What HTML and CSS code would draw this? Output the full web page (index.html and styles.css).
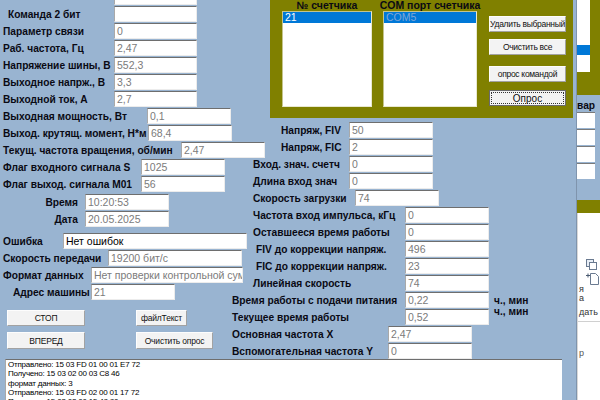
FILE: index.html
```html
<!DOCTYPE html>
<html lang="ru">
<head>
<meta charset="utf-8">
<title>Опрос счетчика</title>
<link rel="stylesheet" href="styles.css">
</head>
<body>
<div class="screen">
  <div class="main">
    <div class="canvas">
      <div class="left">
        <div class="cut"><div class="fld stub"></div></div>
        <div class="row"><span class="lbl w114 ind8">Команда 2 бит</span><div class="fld w83"></div></div>
        <div class="row"><span class="lbl w114">Параметр связи</span><div class="fld w83">0</div></div>
        <div class="row"><span class="lbl w114">Раб. частота, Гц</span><div class="fld w83">2,47</div></div>
        <div class="row"><span class="lbl w114">Напряжение шины, В</span><div class="fld w83">552,3</div></div>
        <div class="row"><span class="lbl w114">Выходное напрж., В</span><div class="fld w83">3,3</div></div>
        <div class="row"><span class="lbl w114">Выходной ток, А</span><div class="fld w83">2,7</div></div>
        <div class="row"><span class="lbl w147">Выходная мощность, Вт</span><div class="fld">0,1</div></div>
        <div class="row"><span class="lbl w148">Выход. крутящ. момент, Н*м</span><div class="fld">68,4</div></div>
        <div class="row"><span class="lbl w181">Текущ. частота вращения, об/мин</span><div class="fld">2,47</div></div>
        <div class="row"><span class="lbl w141">Флаг входного сигнала S</span><div class="fld">1025</div></div>
        <div class="row"><span class="lbl w141">Флаг выход. сигнала М01</span><div class="fld">56</div></div>
        <div class="row mt2"><span class="lbl w85 rt">Время</span><div class="fld">10:20:53</div></div>
        <div class="row"><span class="lbl w85 rt">Дата</span><div class="fld">20.05.2025</div></div>
        <div class="row mt6"><span class="lbl w63">Ошибка</span><div class="fld f184 dark">Нет ошибок</div></div>
        <div class="row"><span class="lbl w108">Скорость передачи</span><div class="fld f134">19200 бит/с</div></div>
        <div class="row"><span class="lbl w91">Формат данных</span><div class="fld f152">Нет проверки контрольной суммы</div></div>
        <div class="row"><span class="lbl w91 ind13">Адрес машины</span><div class="fld">21</div></div>
        <div class="btns">
          <div class="btn b78">СТОП</div>
          <div class="btn b51">файлТекст</div>
          <div class="btn b78 tall">ВПЕРЕД</div>
          <div class="btn b77 tall">Очистить опрос</div>
        </div>
      </div>

      <div class="right">
        <div class="olive">
          <div class="lcol c1">
            <div class="lhead">№ счетчика</div>
            <div class="lbox"><div class="sel">21</div></div>
          </div>
          <div class="lcol c2">
            <div class="lhead">COM порт счетчика</div>
            <div class="lbox"><div class="sel dim">COM5</div></div>
          </div>
          <div class="obtns">
            <div class="btn ob">Удалить выбранный</div>
            <div class="btn ob m7">Очистить все</div>
            <div class="btn ob m11">опрос командой</div>
            <div class="btn ob m8 focus"><span class="frame">Опрос</span></div>
          </div>
        </div>
        <div class="rfields">
          <div class="row ra"><span class="lbl">Напряж, FIV</span><div class="fld">50</div></div>
          <div class="row ra"><span class="lbl">Напряж, FIC</span><div class="fld">2</div></div>
          <div class="row rb"><span class="lbl">Вход. знач. счетч</span><div class="fld">0</div></div>
          <div class="row rb"><span class="lbl">Длина вход знач</span><div class="fld">0</div></div>
          <div class="row rc"><span class="lbl">Скорость загрузки</span><div class="fld">74</div></div>
          <div class="row rd"><span class="lbl">Частота вход импульса, кГц</span><div class="fld">0</div></div>
          <div class="row rd"><span class="lbl">Оставшееся время работы</span><div class="fld">0</div></div>
          <div class="row re"><span class="lbl">FIV до коррекции напряж.</span><div class="fld">496</div></div>
          <div class="row re"><span class="lbl">FIC до коррекции напряж.</span><div class="fld">23</div></div>
          <div class="row rd"><span class="lbl">Линейная скорость</span><div class="fld">74</div></div>
          <div class="row rf"><span class="lbl">Время работы с подачи питания</span><div class="fld">0,22</div><span class="unit low">ч., мин</span></div>
          <div class="row rf"><span class="lbl">Текущее время работы</span><div class="fld">0,52</div><span class="unit high">ч., мин</span></div>
          <div class="row rg"><span class="lbl">Основная частота X</span><div class="fld">2,47</div></div>
          <div class="row rg last"><span class="lbl">Вспомогательная частота Y</span><div class="fld">0</div></div>
        </div>
      </div>
    </div>

    <div class="memo">
      <div>Отправлено: 15 03 FD 01 00 01 E7 72</div>
      <div>Получено: 15 03 02 00 03 C8 46</div>
      <div>формат данных: 3</div>
      <div>Отправлено: 15 03 FD 02 00 01 17 72</div>
      <div>Получено: 15 03 02 00 15 48 80</div>
    </div>
  </div>

  <div class="back">
    <div class="b-top"><div class="b-list"><div class="b-sel"></div></div></div>
    <div class="b-lbl">вар</div>
    <div class="b-fld"></div>
    <div class="b-fld"></div>
    <div class="b-fld"></div>
    <div class="b-fld"></div>
    <div class="b-gap"></div>
    <div class="b-bar"></div>
    <div class="b-panel">
      <div class="b-icon">
        <svg width="14" height="13" viewBox="0 0 14 13"><rect x="1.5" y="1.5" width="7" height="7" fill="#e8eef6" stroke="#6a7a90"/><rect x="4.5" y="4.5" width="7" height="7" fill="#fff" stroke="#6a7a90"/></svg>
      </div>
      <div class="b-icon">
        <svg width="16" height="13" viewBox="0 0 16 13"><path d="M5.5 1.5h5l3 3v8h-8z" fill="#fff" stroke="#6a7a90"/><path d="M1 3.5h4M3 1.5v4" stroke="#4a5a70"/></svg>
      </div>
      <div class="b-txt">я</div>
      <div class="b-txt">а</div>
      <div class="b-txt b-line">дать</div>
      <div class="b-txt b-r">р</div>
    </div>
  </div>
</div>
</body>
</html>
```

FILE: styles.css
```css
* { box-sizing: border-box; }
html, body { margin: 0; padding: 0; }
body {
  width: 600px;
  height: 400px;
  overflow: hidden;
  background: #99b4d1;
  font-family: "Liberation Sans", Arial, sans-serif;
}
.screen { display: flex; width: 600px; height: 400px; overflow: hidden; }

.main {
  width: 577px;
  flex: none;
  background: #99b4d1;
  border-right: 1px solid #7f94ad;
}
.canvas { display: grid; }
.left, .right { grid-area: 1 / 1; }

.row { display: flex; align-items: center; height: 16px; margin-bottom: 1px; }
.lbl {
  flex: none;
  font-size: 10.2px;
  font-weight: bold;
  color: #0a0a14;
  white-space: nowrap;
  padding-left: 3px;
}
.fld {
  flex: none;
  width: 84px;
  height: 16px;
  background: #fff;
  border-top: 1px solid #6e6e6e;
  border-left: 1px solid #a9a9a9;
  border-right: 1px solid #ececec;
  border-bottom: 1px solid #ececec;
  padding-left: 2px;
  font-size: 10.5px;
  line-height: 14px;
  color: #7b7b7b;
  white-space: nowrap;
  overflow: hidden;
}
.fld.dark { color: #000; }
.w83 { width: 83px; }
.f184 { width: 184px; }
.f134 { width: 134px; }
.f152 { width: 152px; }

.cut { height: 6px; padding-left: 114px; }
.fld.stub { width: 83px; height: 5px; border-top: none; }

.lbl.w63 { width: 63px; }
.lbl.w85 { width: 85px; }
.lbl.w91 { width: 91px; }
.lbl.w108 { width: 108px; }
.lbl.w114 { width: 114px; }
.lbl.w141 { width: 141px; }
.lbl.w147 { width: 147px; }
.lbl.w148 { width: 148px; }
.lbl.w181 { width: 181px; }
.lbl.ind8 { padding-left: 8px; }
.lbl.ind13 { padding-left: 13px; }
.lbl.rt { text-align: right; padding-right: 7px; }
.mt2 { margin-top: 2px; }
.mt6 { margin-top: 6px; }

.btns {
  display: grid;
  grid-template-columns: 78px auto;
  column-gap: 51px;
  row-gap: 6px;
  justify-items: start;
  padding-left: 7px;
  margin-top: 10px;
}
.btn {
  height: 16px;
  display: flex;
  align-items: center;
  justify-content: center;
  background: #f3f3f3;
  border: 1px solid;
  border-color: #fdfdfd #a2a2a2 #a2a2a2 #fdfdfd;
  font-size: 8.5px;
  letter-spacing: -0.2px;
  color: #111;
  white-space: nowrap;
}
.btn.tall { height: 17px; }
.b78 { width: 78px; }
.b51 { width: 51px; }
.b77 { width: 77px; }

/* olive list panel */
.right { display: flex; flex-direction: column; }
.olive {
  margin-left: 270px;
  width: 303px;
  height: 118px;
  background: #808000;
  display: flex;
  padding-left: 12px;
}
.lcol { display: flex; flex-direction: column; }
.c1 { width: 90px; }
.c2 { width: 94px; margin-left: 11px; }
.lhead {
  height: 11px;
  display: flex;
  justify-content: center;
  font-size: 10.5px;
  line-height: 11px;
  font-weight: bold;
  color: #0a0a14;
  white-space: nowrap;
}
.lbox {
  height: 96px;
  background: #fff;
  border-top: 1px solid #c4c48c;
  border-left: 1px solid #c4c48c;
  border-right: 1px solid #e8e8d0;
  border-bottom: 1px solid #e8e8d0;
}
.sel {
  height: 11px;
  background: #0078d7;
  color: #fff;
  font-size: 10.5px;
  line-height: 11px;
  padding-left: 2px;
}
.sel.dim { color: #7fa6d8; }
.obtns { display: flex; flex-direction: column; width: 77px; margin-left: 12px; padding-top: 16px; }
.btn.ob { width: 77px; letter-spacing: -0.3px; }
.m7 { margin-top: 7px; }
.m11 { margin-top: 11px; }
.m8 { margin-top: 8px; }
.btn.focus { border-color: #6a6a6a; padding: 1px; }
.frame {
  width: 100%;
  height: 100%;
  border: 1px dotted #333;
  display: flex;
  align-items: center;
  justify-content: center;
  font-size: 10px;
  letter-spacing: 0;
}

.rfields { margin-top: 4px; }
.rfields .lbl { padding-left: 0; }
.ra { margin-left: 281px; }
.ra .lbl { width: 68px; }
.rb { margin-left: 253px; }
.rb .lbl { width: 96px; }
.rc { margin-left: 253px; }
.rc .lbl { width: 102px; }
.rd { margin-left: 253px; }
.rd .lbl { width: 152px; }
.re { margin-left: 256px; }
.re .lbl { width: 149px; }
.rf { margin-left: 232px; }
.rf .lbl { width: 173px; }
.rg { margin-left: 232px; }
.rg .lbl { width: 156px; }
.row.last { margin-bottom: 0; }
.unit {
  font-size: 10.2px;
  font-weight: bold;
  line-height: 10px;
  color: #0a0a14;
  margin-left: 5px;
  white-space: nowrap;
}
.unit.low { align-self: flex-end; margin-bottom: 2px; }
.unit.high { align-self: flex-start; margin-top: -2px; }

.memo {
  margin-left: 5px;
  width: 557px;
  height: 60px;
  background: #fff;
  border-top: 1px solid #6e6e6e;
  border-left: 1px solid #a9a9a9;
  padding-left: 2px;
  font-size: 8px;
  letter-spacing: -0.2px;
  line-height: 9.3px;
  color: #000;
  white-space: nowrap;
}

/* window behind, on the right */
.back { flex: 1; display: flex; flex-direction: column; background: #99b4d1; }
.b-top { height: 95px; background: #808000; }
.b-list { width: 13px; height: 72px; background: #fff; padding-top: 45px; }
.b-sel { height: 10px; background: #0078d7; }
.b-lbl { height: 17px; font-size: 10.2px; font-weight: bold; padding-top: 5px; line-height: 11px; color: #0a0a14; }
.b-fld { width: 18px; height: 16px; background: #fff; border-top: 1px solid #7a7a7a; margin-bottom: 1px; }
.b-gap { height: 20px; }
.b-bar { height: 13px; background: #808000; }
.b-panel {
  flex: 1;
  background: #fff;
  border-left: 1px solid #d8d8d8;
  padding-top: 44px;
}
.b-icon { height: 14px; padding-left: 7px; }
.b-txt { font-size: 9px; line-height: 9px; color: #333; padding-left: 1px; white-space: nowrap; }
.b-line { padding-top: 5px; padding-bottom: 4px; border-bottom: 1px solid #d0d0d0; }
.b-r { padding-top: 27px; color: #555; }
```
